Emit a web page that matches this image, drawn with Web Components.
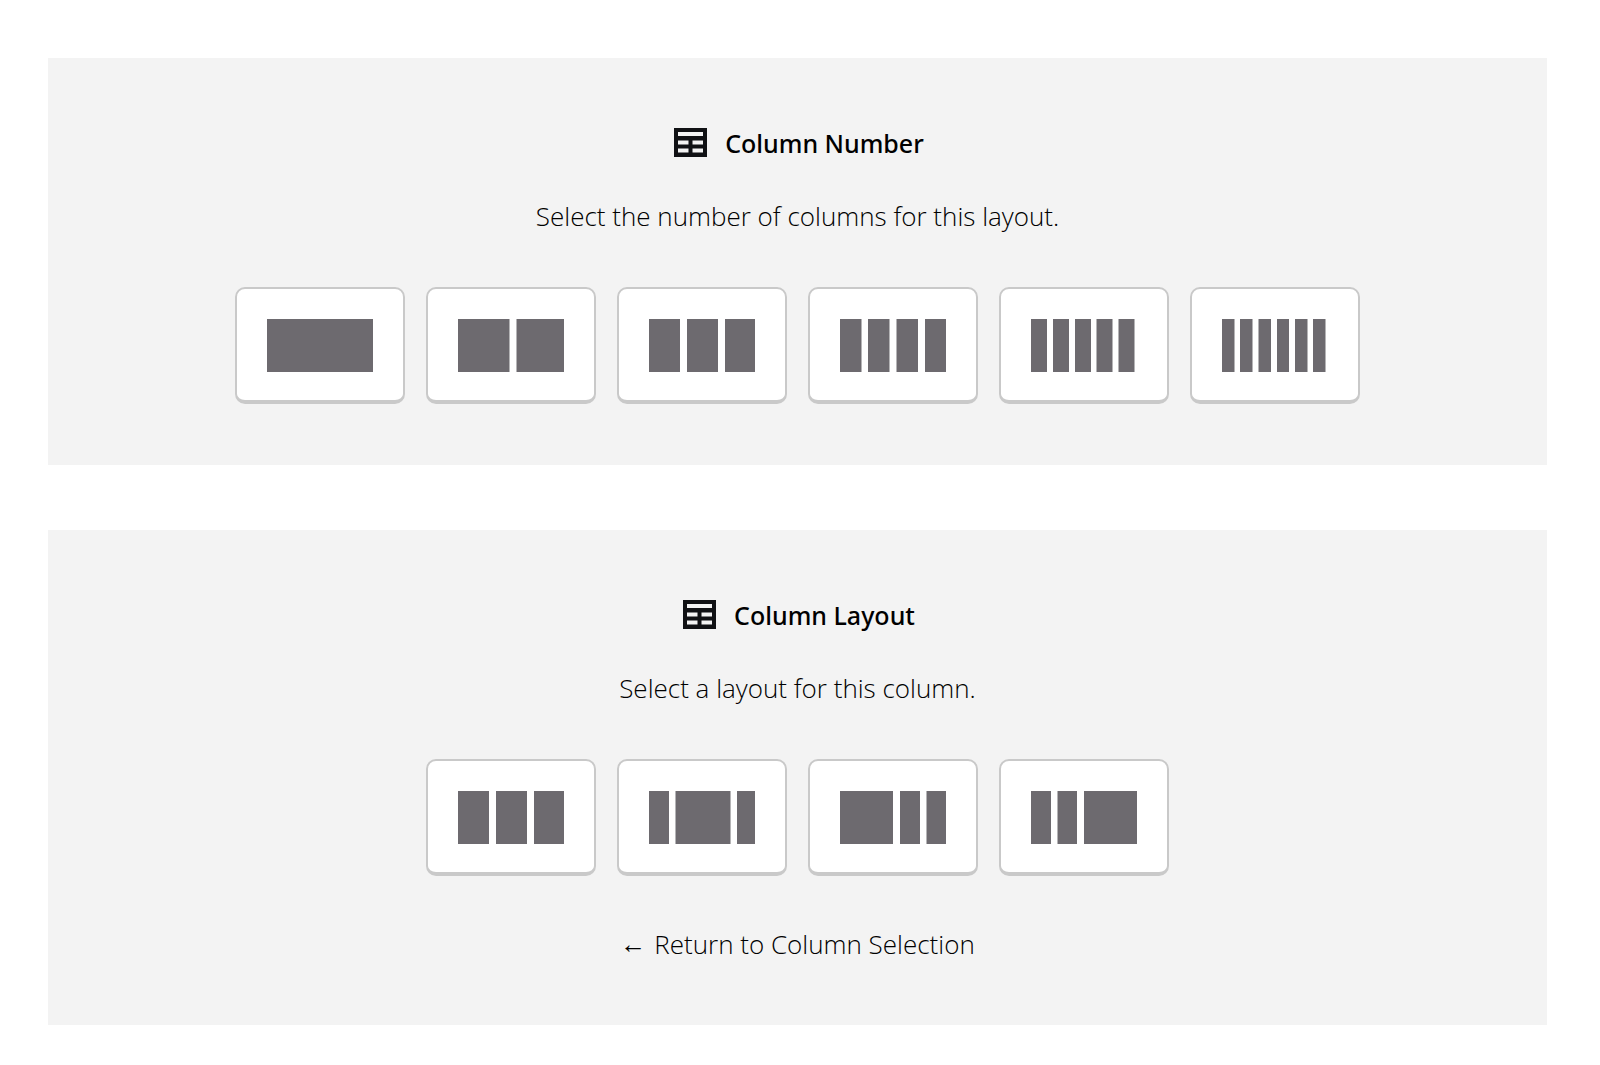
<!DOCTYPE html>
<html lang="en">
<head>
<meta charset="UTF-8">
<meta name="viewport" content="width=device-width, initial-scale=1.0">
<title>Column Layouts</title>
<style>
	body {
		margin: 0;
		background: #fff;
		color: #000;
		font-family: "Open Sans", "Noto Sans", sans-serif;
		font-size: 26px;
		line-height: 40px;
	}
	main {
		display: flex;
		flex-direction: column;
		gap: 65px;
		padding: 58px 53px 40px 48px;
	}
</style>
</head>
<body>
<main>
	<layout-panel heading="Column Number" description="Select the number of columns for this layout.">
		<column-option label="1 column" bars="0-106"></column-option>
		<column-option label="2 columns" bars="0-51.5 58.5-106"></column-option>
		<column-option label="3 columns" bars="0-31 38-69 76-106"></column-option>
		<column-option label="4 columns" bars="0-21.5 28-49.5 56.5-78 85-106"></column-option>
		<column-option label="5 columns" bars="0-16 22-38 44-60 65.5-81.5 87.5-103.5"></column-option>
		<column-option label="6 columns" bars="0-12.5 18-30.5 36.5-49 55-67 73-85.5 91-103.5"></column-option>
	</layout-panel>

	<layout-panel heading="Column Layout" description="Select a layout for this column.">
		<column-option label="Equal columns" bars="0-31 38-69 76-106"></column-option>
		<column-option label="Wide center" bars="0-20 26.5-81.5 88-106"></column-option>
		<column-option label="Wide left" bars="0-53 60-80 86.5-106"></column-option>
		<column-option label="Wide right" bars="0-20 26.5-46 53-106"></column-option>
		<back-link slot="footer" href="#columns">Return to Column Selection</back-link>
	</layout-panel>
</main>

<script>
class TableIcon extends HTMLElement {
	constructor() {
		super();
		this.attachShadow({ mode: 'open' });
	}

	connectedCallback() {
		this.shadowRoot.innerHTML = `
		<style>
		:host { display: block; padding: 0 0 2px 3px; color: #101114; }
		svg { display: block; }
		</style>
		<svg width="33" height="29" viewBox="0 0 33 29" fill="currentColor" fill-rule="evenodd" aria-hidden="true">
			<path d="M0 0H33V29H0ZM4 4V8H29V4ZM4 12.5V16.5H14.5V12.5ZM18.5 12.5V16.5H29V12.5ZM4 20.5V24.5H14.5V20.5ZM18.5 20.5V24.5H29V20.5Z"/>
		</svg>
		`;
	}
}

class ColumnOption extends HTMLElement {
	constructor() {
		super();
		this.attachShadow({ mode: 'open' });
	}

	connectedCallback() {
		this.render();
	}

	// "0-51 58-106" -> one rect for each start-end pair
	get rects() {
		return this.getAttribute('bars').split(' ').map((bar) => {
			const [start, end] = bar.split('-').map(Number);
			return `<rect x="${start}" y="0" width="${end - start}" height="53"/>`;
		}).join('');
	}

	render() {
		this.shadowRoot.innerHTML = `
		<style>
		:host { display: block; }
		button {
			display: block;
			box-sizing: border-box;
			padding: 30px 30px 28px;
			border: 2px solid #c9c9c9;
			border-bottom-width: 4px;
			border-radius: 10px;
			background: #fff;
			color: #6d6a6f;
			cursor: pointer;
		}
		button:hover { border-color: #8d8d8d; }
		svg { display: block; }
		</style>
		<button type="button" aria-label="${this.getAttribute('label')}">
			<svg width="106" height="53" viewBox="0 0 106 53" fill="currentColor" aria-hidden="true">${this.rects}</svg>
		</button>
		`;
	}
}

class BackLink extends HTMLElement {
	constructor() {
		super();
		this.attachShadow({ mode: 'open' });
	}

	connectedCallback() {
		this.shadowRoot.innerHTML = `
		<style>
		:host { display: block; margin-top: 48px; }
		a {
			display: flex;
			gap: 8px;
			color: inherit;
			text-decoration: none;
		}
		a:hover { text-decoration: underline; }
		.arrow { font-family: "Liberation Sans", sans-serif; }
		</style>
		<a href="${this.getAttribute('href')}"><span class="arrow">←</span><span><slot></slot></span></a>
		`;
	}
}

class LayoutPanel extends HTMLElement {
	constructor() {
		super();
		this.attachShadow({ mode: 'open' });
	}

	connectedCallback() {
		this.render();
	}

	render() {
		this.shadowRoot.innerHTML = `
		<style>
		:host { display: block; background: #f3f3f3; font-weight: 300; }
		section {
			display: flex;
			flex-direction: column;
			align-items: center;
			padding: 65px 24px 61px;
		}
		header { display: flex; align-items: center; gap: 18px; }
		h2 { margin: 0; font-family: "Noto Sans", sans-serif; font-size: 25px; font-weight: 500; }
		p { margin: 33px 0 51px; text-align: center; }
		.options {
			display: flex;
			flex-wrap: wrap;
			justify-content: center;
			gap: 21px;
		}
		</style>
		<section>
			<header><table-icon></table-icon><h2>${this.getAttribute('heading')}</h2></header>
			<p>${this.getAttribute('description')}</p>
			<div class="options"><slot></slot></div>
			<slot name="footer"></slot>
		</section>
		`;
	}
}

customElements.define('table-icon', TableIcon);
customElements.define('column-option', ColumnOption);
customElements.define('back-link', BackLink);
customElements.define('layout-panel', LayoutPanel);
</script>
</body>
</html>
